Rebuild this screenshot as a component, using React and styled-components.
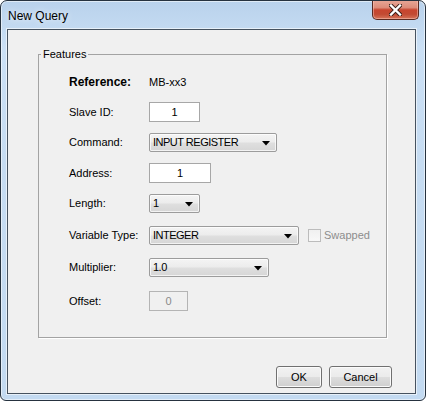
import React from "react";
import styled, { createGlobalStyle } from "styled-components";

const Global = createGlobalStyle`
  html, body {
    margin: 0;
    padding: 0;
    background: #ffffff;
  }
  * { box-sizing: border-box; }
`;

const UI_FONT = `"Liberation Sans", Arial, sans-serif`;

const Window = styled.div`
  width: 426px;
  height: 401px;
  display: flex;
  flex-direction: column;
  border: 1px solid #26323f;
  border-radius: 7px 7px 6px 6px;
  background: linear-gradient(180deg, #b9d2ec 0%, #cbe0f5 12%, #c6dcf2 40%, #c3daf1 100%);
  box-shadow: inset 0 0 0 1px rgba(255, 255, 255, 0.55);
  overflow: hidden;
  font-family: ${UI_FONT};
`;

const TitleBar = styled.div`
  height: 28px;
  flex: none;
  display: flex;
  align-items: flex-start;
  justify-content: space-between;
  padding: 0 6px 0 7px;
`;

const Title = styled.div`
  font-size: 12px;
  line-height: 14px;
  margin-top: 8px;
  color: #000;
  text-shadow: 0 0 6px rgba(255, 255, 255, 0.9);
`;

const CloseButton = styled.div`
  width: 47px;
  height: 20px;
  margin-top: -1px;
  display: flex;
  align-items: center;
  justify-content: center;
  border: 1px solid #5a2a22;
  border-top: none;
  border-radius: 0 0 5px 5px;
  background: linear-gradient(
    180deg,
    #e8a898 0%,
    #dd8c7a 40%,
    #c8452f 52%,
    #c24a33 75%,
    #d6745a 100%
  );
  box-shadow: inset 0 0 0 1px rgba(255, 210, 200, 0.45);
`;

const Client = styled.div`
  flex: 1;
  margin: 0 9px 6px 6px;
  display: flex;
  flex-direction: column;
  background: #f0f0f0;
  border: 1px solid #46525f;
  box-shadow: 0 0 0 1px rgba(255, 255, 255, 0.6);
  padding: 0 23px 5px 30px;
`;

const Group = styled.fieldset`
  margin: 17px 5px 0 0;
  padding: 11px 0 26px 2px;
  border: 1px solid #a3a3a3;
  box-shadow: 1px 1px 0 #ffffff;
  min-width: 0;
`;

const Legend = styled.legend`
  padding: 0 2px;
  font-size: 11px;
  line-height: 14px;
  color: #000;
`;

const Rows = styled.div`
  display: flex;
  flex-direction: column;
  padding-left: 28px;
`;

const Row = styled.div`
  display: flex;
  align-items: center;
  height: 20px;
  margin-top: ${(p) => p.$gap || 0}px;
`;

const Label = styled.div`
  width: 80px;
  flex: none;
  font-size: ${(p) => (p.$strong ? 12 : 11)}px;
  font-weight: ${(p) => (p.$strong ? 700 : 400)};
  color: #000;
`;

const Value = styled.div`
  font-size: 11px;
  color: #000;
`;

const TextField = styled.div`
  width: ${(p) => p.$w}px;
  height: 20px;
  display: flex;
  align-items: center;
  justify-content: center;
  font-size: 11px;
  color: ${(p) => (p.$disabled ? "#8a8a8a" : "#000")};
  background: ${(p) => (p.$disabled ? "#f0f0f0" : "#ffffff")};
  border: 1px solid ${(p) => (p.$disabled ? "#b4b4b4" : "#a7a7a7")};
`;

const Combo = styled.div`
  width: ${(p) => p.$w}px;
  height: 19px;
  display: flex;
  align-items: center;
  justify-content: space-between;
  padding: 0 6px 0 3px;
  border: 1px solid #9c9c9c;
  border-radius: 2px;
  background: linear-gradient(180deg, #f4f4f4 0%, #ececec 48%, #dfdfdf 52%, #d6d6d6 100%);
  box-shadow: inset 0 0 0 1px rgba(255, 255, 255, 0.7);
  font-size: 11px;
  letter-spacing: -0.5px;
  color: #000;
`;

const Arrow = () => (
  <svg width="8" height="5" viewBox="0 0 8 5" style={{ marginTop: 3 }}>
    <polygon points="0,0 8,0 4,4.5" fill="#000" />
  </svg>
);

const CheckOption = styled.div`
  display: flex;
  align-items: center;
  margin-left: 9px;
  gap: 3px;
  font-size: 11px;
  color: #8d8d8d;
`;

const CheckBox = styled.div`
  width: 13px;
  height: 13px;
  border: 1px solid #bcbcbc;
  background: linear-gradient(180deg, #f0f0f0, #f8f8f8);
`;

const ButtonBar = styled.div`
  margin-top: auto;
  display: flex;
  justify-content: flex-end;
  gap: 7px;
`;

const Button = styled.div`
  width: ${(p) => p.$w}px;
  height: 22px;
  display: flex;
  align-items: center;
  justify-content: center;
  font-size: 11px;
  color: #000;
  border: 1px solid #707070;
  border-radius: 3px;
  background: linear-gradient(180deg, #f2f2f2 0%, #ebebeb 48%, #dddddd 52%, #cfcfcf 100%);
  box-shadow: inset 0 0 0 1px #fbfbfb;
`;

const CloseGlyph = () => (
  <svg width="13" height="12" viewBox="0 0 13 12">
    <path
      d="M2 1.5 L11 10.5 M11 1.5 L2 10.5"
      stroke="#3b1e18"
      strokeWidth="4.2"
      strokeLinecap="square"
    />
    <path
      d="M2 1.5 L11 10.5 M11 1.5 L2 10.5"
      stroke="#ffffff"
      strokeWidth="2.4"
      strokeLinecap="square"
    />
  </svg>
);

export default function App() {
  return (
    <>
      <Global />
      <Window>
        <TitleBar>
          <Title>New Query</Title>
          <CloseButton>
            <CloseGlyph />
          </CloseButton>
        </TitleBar>
        <Client>
          <Group>
            <Legend>Features</Legend>
            <Rows>
              <Row>
                <Label $strong>Reference:</Label>
                <Value>MB-xx3</Value>
              </Row>
              <Row $gap={10}>
                <Label>Slave ID:</Label>
                <TextField $w={51}>1</TextField>
              </Row>
              <Row $gap={10}>
                <Label>Command:</Label>
                <Combo $w={128}>
                  <span>INPUT REGISTER</span>
                  <Arrow />
                </Combo>
              </Row>
              <Row $gap={11}>
                <Label>Address:</Label>
                <TextField $w={62}>1</TextField>
              </Row>
              <Row $gap={10}>
                <Label>Length:</Label>
                <Combo $w={51}>
                  <span>1</span>
                  <Arrow />
                </Combo>
              </Row>
              <Row $gap={12}>
                <Label>Variable Type:</Label>
                <Combo $w={150}>
                  <span>INTEGER</span>
                  <Arrow />
                </Combo>
                <CheckOption>
                  <CheckBox />
                  <span>Swapped</span>
                </CheckOption>
              </Row>
              <Row $gap={12}>
                <Label>Multiplier:</Label>
                <Combo $w={120}>
                  <span>1.0</span>
                  <Arrow />
                </Combo>
              </Row>
              <Row $gap={14}>
                <Label>Offset:</Label>
                <TextField $w={39} $disabled>
                  0
                </TextField>
              </Row>
            </Rows>
          </Group>
          <ButtonBar>
            <Button $w={46}>OK</Button>
            <Button $w={63}>Cancel</Button>
          </ButtonBar>
        </Client>
      </Window>
    </>
  );
}
